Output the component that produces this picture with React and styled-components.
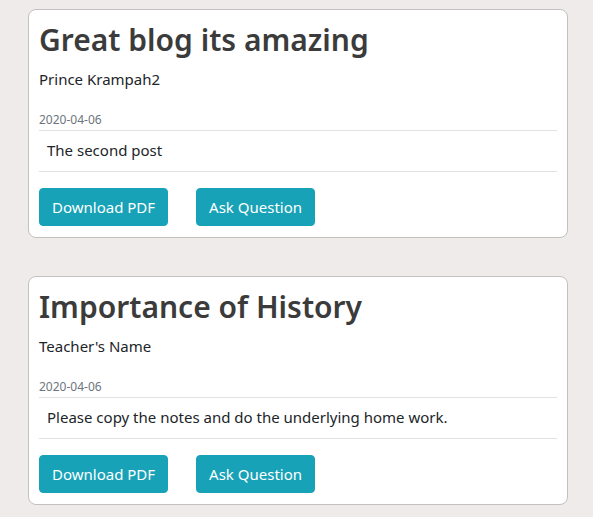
import React from "react";
import styled, { createGlobalStyle } from "styled-components";

const GlobalStyles = createGlobalStyle`
  html, body {
    margin: 0;
    padding: 0;
    background: #efebea;
  }
  body {
    font-family: "Noto Sans", "Open Sans", sans-serif;
    color: #212529;
  }
`;

const Page = styled.div`
  display: flex;
  flex-direction: column;
  gap: 38px;
  padding: 9px 25px 20px 28px;
`;

const Card = styled.div`
  background: #ffffff;
  border: 1px solid #c3c0bf;
  border-radius: 8px;
  padding: 10px 10px 11px 10px;
  display: flex;
  flex-direction: column;
`;

const Title = styled.h1`
  margin: 0;
  font-size: 30px;
  font-weight: 600;
  line-height: 40px;
  color: #3b3b3b;
`;

const Author = styled.p`
  margin: 8px 0 0;
  font-size: 15px;
  line-height: 22px;
  color: #212529;
`;

const Date = styled.small`
  display: block;
  margin-top: 22px;
  font-size: 12px;
  line-height: 16px;
  color: #6c757d;
`;

const Divider = styled.hr`
  margin: ${(p) => p.$top || 0}px 0 0;
  border: 0;
  border-top: 1px solid #e1e1e1;
`;

const Body = styled.p`
  margin: 0;
  padding: 8px 8px 10px;
  font-size: 15px;
  line-height: 22px;
  color: #212529;
`;

const Actions = styled.div`
  display: flex;
  gap: 28px;
  margin-top: 16px;
`;

const Button = styled.button`
  background: #17a2b8;
  color: #ffffff;
  border: 1px solid #17a2b8;
  border-radius: 4px;
  padding: 0 12px;
  height: 38px;
  font-family: inherit;
  font-size: 15px;
  line-height: 24px;
  cursor: pointer;
`;

const posts = [
  {
    title: "Great blog its amazing",
    author: "Prince Krampah2",
    date: "2020-04-06",
    body: "The second post",
  },
  {
    title: "Importance of History",
    author: "Teacher's Name",
    date: "2020-04-06",
    body: "Please copy the notes and do the underlying home work.",
  },
];

const PostCard = ({ post }) => (
  <Card>
    <Title>{post.title}</Title>
    <Author>{post.author}</Author>
    <Date>{post.date}</Date>
    <Divider $top={2} />
    <Body>{post.body}</Body>
    <Divider />
    <Actions>
      <Button>Download PDF</Button>
      <Button>Ask Question</Button>
    </Actions>
  </Card>
);

export default function App() {
  return (
    <>
      <GlobalStyles />
      <Page>
        {posts.map((p) => (
          <PostCard key={p.title} post={p} />
        ))}
      </Page>
    </>
  );
}
